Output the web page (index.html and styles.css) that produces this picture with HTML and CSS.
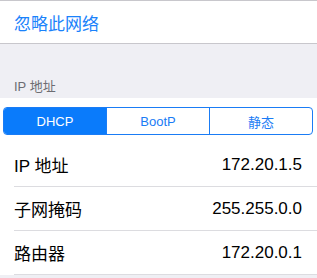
FILE: index.html
```html
<!DOCTYPE html>
<html>
<head>
<meta charset="utf-8">
<link rel="stylesheet" href="styles.css">
</head>
<body>
<div class="group top">
  <div class="action">忽略此网络</div>
</div>
<div class="header">IP 地址</div>
<div class="group main">
  <div class="seg-wrap">
    <div class="seg">
      <div class="seg-item active">DHCP</div>
      <div class="seg-item">BootP</div>
      <div class="seg-item">静态</div>
    </div>
  </div>
  <div class="row"><span class="label">IP 地址</span><span class="value">172.20.1.5</span></div>
  <div class="row"><span class="label">子网掩码</span><span class="value">255.255.0.0</span></div>
  <div class="row"><span class="label">路由器</span><span class="value">172.20.0.1</span></div>
</div>
</body>
</html>
```
FILE: styles.css
```css
html, body {
  margin: 0;
  padding: 0;
  background: #efeff4;
  font-family: "Liberation Sans", "Noto Sans CJK SC", sans-serif;
  -webkit-font-smoothing: antialiased;
}
.group {
  background: #fff;
}
.top {
  border-top: 1px solid #c8c7cc;
  border-bottom: 1px solid #c8c7cc;
  height: 42px;
  display: flex;
  align-items: center;
}
.action {
  padding-left: 14px;
  color: #1a82fb;
  font-size: 17px;
}
.header {
  height: 54px;
  box-sizing: border-box;
  padding: 32px 0 0 14px;
  color: #6d6d72;
  font-size: 13px;
}
.seg-wrap {
  padding: 9px 4px 8px 3px;
}
.seg {
  display: flex;
  height: 28px;
  box-sizing: border-box;
  border: 1px solid #1a7cf5;
  border-radius: 4px;
  overflow: hidden;
}
.seg-item {
  flex: 1;
  display: flex;
  align-items: center;
  justify-content: center;
  font-size: 13px;
  color: #1a7cf5;
  border-left: 1px solid #1a7cf5;
}
.seg-item:first-child {
  border-left: none;
}
.seg-item.active {
  background: #0a7bfb;
  color: #fff;
}
.row {
  height: 44px;
  margin-left: 14px;
  padding-right: 15px;
  border-bottom: 1px solid #dcdce0;
  box-sizing: border-box;
  display: flex;
  align-items: center;
  justify-content: space-between;
  font-size: 17px;
  color: #000;
}
```
